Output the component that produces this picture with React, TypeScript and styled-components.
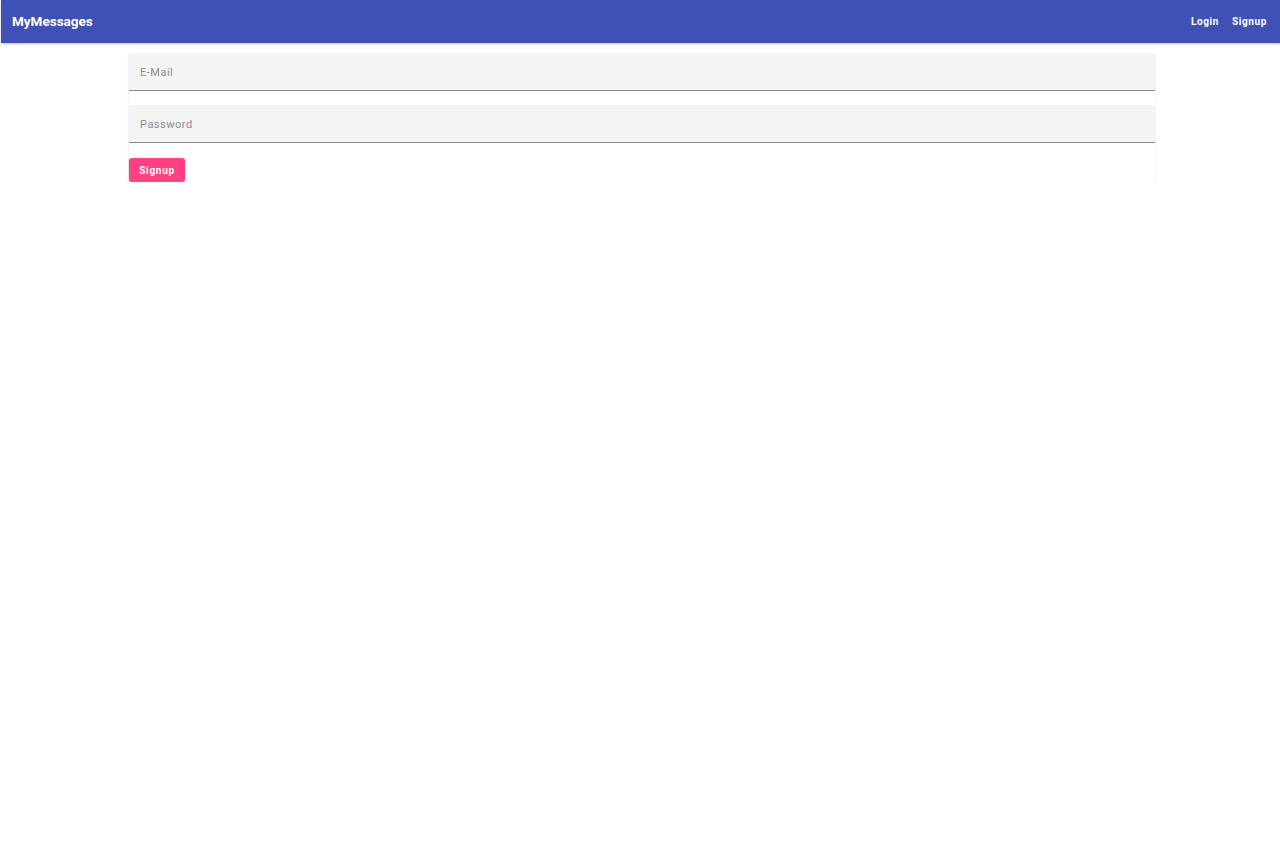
import React from "react";
import styled, { createGlobalStyle } from "styled-components";

const Global = createGlobalStyle`
  html, body { margin: 0; padding: 0; background: #fff; }
  body { font-family: Roboto, "Noto Sans", Arial, sans-serif; }
  * { box-sizing: border-box; }
`;

const Toolbar = styled.header`
  margin-left: 1px;
  height: 43px;
  background: #3f51b5;
  display: flex;
  align-items: center;
  justify-content: space-between;
  padding: 0 13px 1px 11px;
  box-shadow: 0 1px 2px rgba(0,0,0,0.25);
  color: #fff;
`;

const Brand = styled.div`
  font-size: 13.5px;
  font-weight: 700;
  letter-spacing: 0;
`;

const Nav = styled.nav`
  display: flex;
  gap: 13px;
`;

const NavLink = styled.a`
  color: #fff;
  font-size: 10px;
  font-weight: 700;
  letter-spacing: 0.6px;
  text-decoration: none;
`;

const Card = styled.form`
  width: 1026px;
  margin: 10px 0 0 129px;
  border-radius: 3px;
  background: #fff;
  box-shadow: 0 1px 2px rgba(0,0,0,0.18);
  display: flex;
  flex-direction: column;
  gap: 14px;
`;

const Field = styled.div`
  height: 38px;
  background: #f4f4f4;
  border-bottom: 1px solid #8a8a8a;
  border-radius: 3px 3px 0 0;
  display: flex;
  align-items: center;
  padding: 0 11px;
`;

const Input = styled.input`
  border: none;
  background: transparent;
  outline: none;
  width: 100%;
  font-family: inherit;
  font-size: 11px;
  font-weight: 400;
  letter-spacing: 0.5px;
  color: #333;
  padding: 0;
  margin-top: 1px;
  &::placeholder { color: #8c8c8c; }
`;

const Actions = styled.div`
  display: flex;
  padding-top: 1px;
`;

const Button = styled.button`
  height: 24px;
  width: 56px;
  border: none;
  border-radius: 3px;
  background: #ff4081;
  color: #fff;
  font-family: inherit;
  font-size: 10px;
  font-weight: 700;
  letter-spacing: 0.7px;
  padding: 0;
  box-shadow: 0 1px 2px rgba(0,0,0,0.2);
`;

export default function App() {
  return (
    <>
      <Global />
      <Toolbar>
        <Brand>MyMessages</Brand>
        <Nav>
          <NavLink>Login</NavLink>
          <NavLink>Signup</NavLink>
        </Nav>
      </Toolbar>
      <Card onSubmit={(e) => e.preventDefault()}>
        <Field><Input placeholder="E-Mail" /></Field>
        <Field><Input placeholder="Password" type="password" /></Field>
        <Actions><Button type="submit">Signup</Button></Actions>
      </Card>
    </>
  );
}
